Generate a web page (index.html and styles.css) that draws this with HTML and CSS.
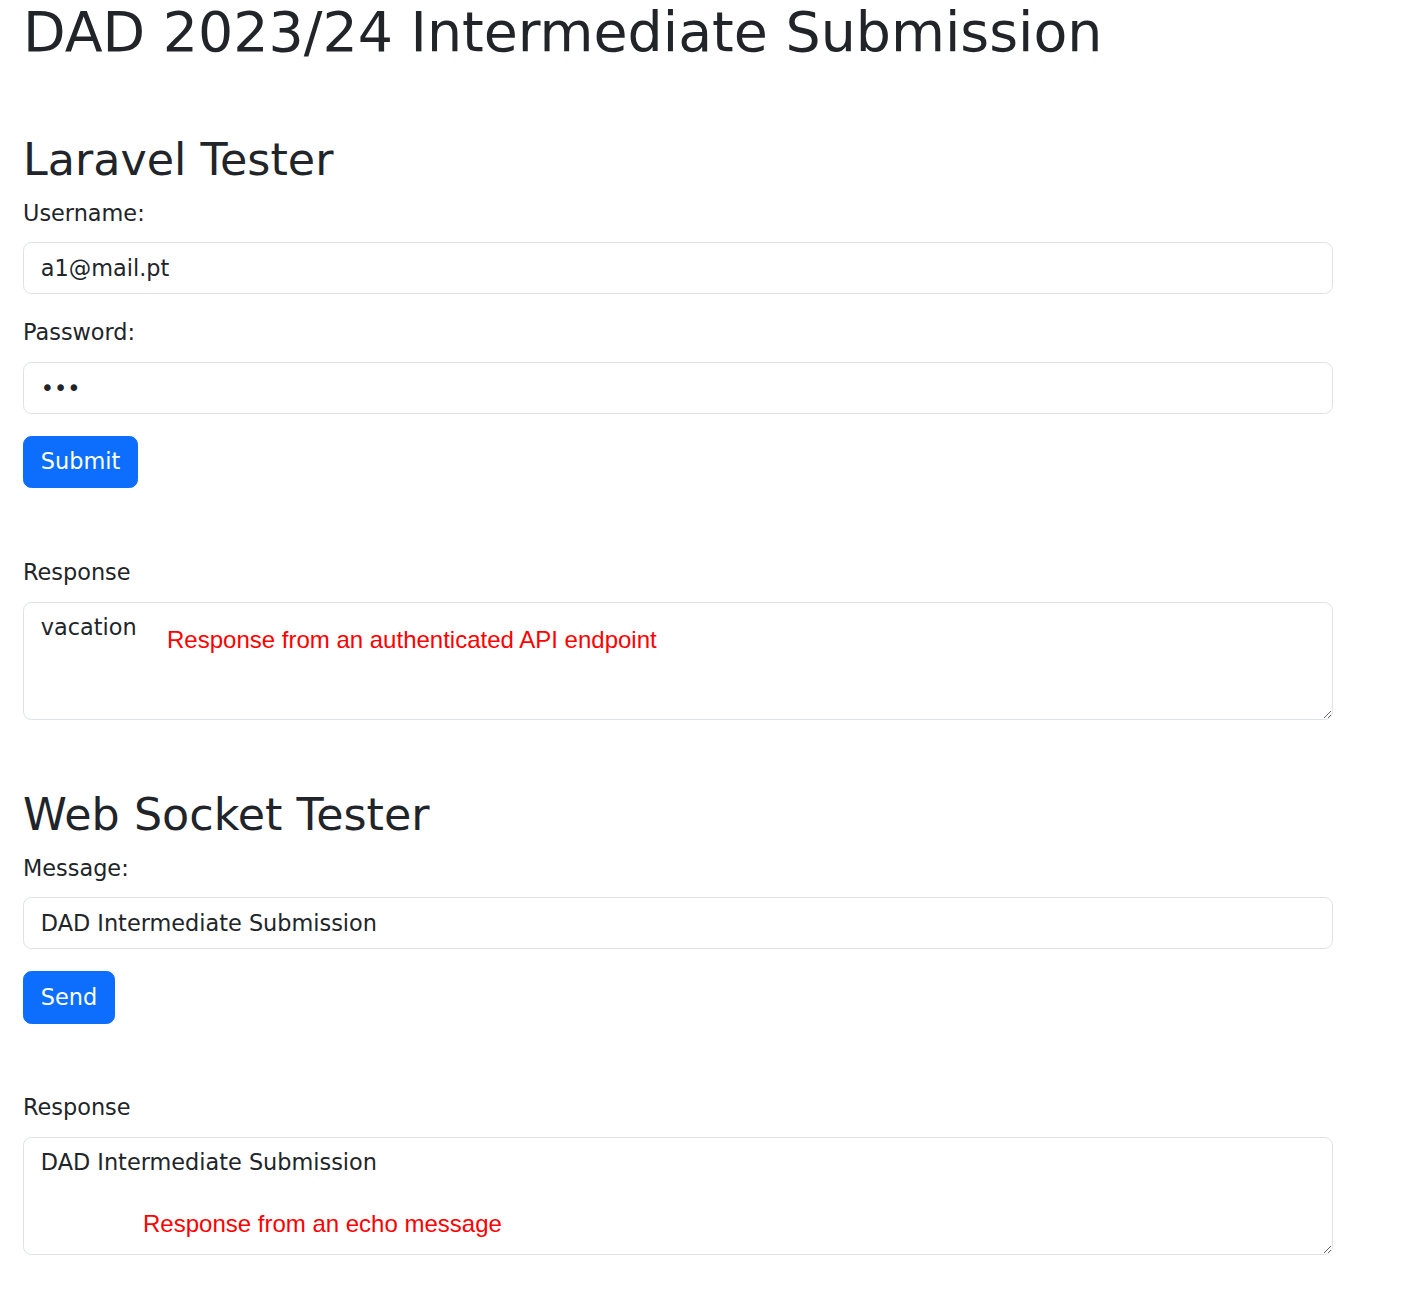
FILE: index.html
```html
<!DOCTYPE html>
<html lang="en">
<head>
<meta charset="utf-8">
<title>DAD 2023/24 Intermediate Submission</title>
<link rel="stylesheet" href="styles.css">
</head>
<body>
<div class="page">
  <h1 class="title">DAD 2023/24 Intermediate Submission</h1>

  <section class="tester">
    <h2 class="tester-title">Laravel Tester</h2>
    <div class="field">
      <label class="field-label" for="username">Username:</label>
      <input class="form-control" id="username" type="text" value="a1@mail.pt">
    </div>
    <div class="field">
      <label class="field-label" for="password">Password:</label>
      <input class="form-control" id="password" type="password" value="123">
    </div>
    <button class="btn" type="button">Submit</button>
    <div class="response">
      <label class="field-label" for="resp1">Response</label>
      <div class="response-box">
        <textarea class="form-control response-area" id="resp1" rows="3">vacation</textarea>
        <span class="note note-api">Response from an authenticated API endpoint</span>
      </div>
    </div>
  </section>

  <section class="tester tester-next">
    <h2 class="tester-title">Web Socket Tester</h2>
    <div class="field">
      <label class="field-label" for="message">Message:</label>
      <input class="form-control" id="message" type="text" value="DAD Intermediate Submission">
    </div>
    <button class="btn" type="button">Send</button>
    <div class="response">
      <label class="field-label" for="resp2">Response</label>
      <div class="response-box">
        <textarea class="form-control response-area" id="resp2" rows="3">DAD Intermediate Submission</textarea>
        <span class="note note-echo">Response from an echo message</span>
      </div>
    </div>
  </section>
</div>
</body>
</html>
```

FILE: styles.css
```css
* {
  box-sizing: border-box;
}

html, body {
  margin: 0;
  padding: 0;
  background: #ffffff;
}

body {
  font-family: "DejaVu Sans", sans-serif;
  font-size: 22.4px;
  line-height: 1.5;
  color: #212529;
}

.page {
  padding-left: 23px;
  width: 1333px;
}

.title {
  margin: -1px 0 0 0;
  font-size: 55.4px;
  font-weight: 400;
  line-height: 1.2;
}

.tester {
  margin-top: 67.5px;
}

.tester-next {
  margin-top: 68.5px;
}

.tester-title {
  margin: 0 0 10.5px 0;
  font-size: 44.4px;
  font-weight: 400;
  line-height: 1.2;
}

.field {
  margin-bottom: 22px;
}

.field-label {
  display: inline-block;
  margin-bottom: 12px;
}

.form-control {
  display: block;
  width: 100%;
  height: 52px;
  padding: 8.2px 16.8px;
  font-family: "DejaVu Sans", sans-serif;
  font-size: 22.4px;
  line-height: 1.5;
  color: #212529;
  background: #ffffff;
  border: 1px solid #dee2e6;
  border-radius: 8.4px;
  outline: none;
}

.btn {
  display: inline-block;
  height: 52.5px;
  padding: 8.2px 16.8px;
  font-family: "DejaVu Sans", sans-serif;
  font-size: 22.4px;
  line-height: 1.5;
  color: #ffffff;
  background: #0d6efd;
  border: 1px solid #0d6efd;
  border-radius: 8.4px;
  cursor: pointer;
}

.response {
  margin-top: 67.5px;
}

.response-box {
  position: relative;
}

.response-area {
  height: 118px;
  resize: vertical;
}

.note {
  position: absolute;
  font-family: "Liberation Sans", Arial, sans-serif;
  font-size: 24px;
  line-height: 1;
  color: #ff0000;
  white-space: nowrap;
}

.note-api {
  left: 144px;
  top: 26px;
}

.note-echo {
  left: 120px;
  top: 75px;
}
```
